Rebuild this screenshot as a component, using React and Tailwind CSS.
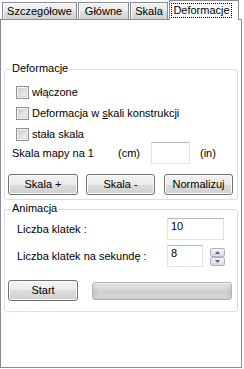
import React from "react";

function Tab({ w, children }) {
  return (
    <div
      className={`flex h-[17px] items-center justify-center border border-b-0 border-[#898c95] bg-[linear-gradient(#f3f3f3,#ebebeb_50%,#dedede_50%,#d3d3d3)] shadow-[inset_1px_1px_0_#fbfbfb] ${w}`}
    >
      {children}
    </div>
  );
}

function Check() {
  return (
    <div className="h-[13px] w-[13px] shrink-0 border border-[#8f8f8f] bg-[#f4f4f4] p-[1px]">
      <div className="h-full w-full border border-[#d8d8d8] bg-[linear-gradient(135deg,#cdcdcd,#f2f2f2)]" />
    </div>
  );
}

function Btn({ w, className = "", children }) {
  return (
    <div
      className={`flex h-[21px] shrink-0 items-center justify-center rounded-[3px] border border-[#707070] bg-[linear-gradient(#f2f2f2,#ebebeb_50%,#dddddd_50%,#cfcfcf)] shadow-[inset_0_0_0_1px_#fcfcfc] ${w} ${className}`}
    >
      {children}
    </div>
  );
}

function Input({ w, children }) {
  return (
    <div
      className={`h-[22px] shrink-0 border border-[#dfe2e8] border-t-[#b5b8c0] bg-white pl-[3px] pt-[1px] ${w}`}
    >
      {children}
    </div>
  );
}

function SpinBtn({ up }) {
  return (
    <div className="flex h-[9px] w-[15px] items-center justify-center rounded-[2px] border border-[#aeb4be] bg-[linear-gradient(#f7f7f7,#e6e6e6_50%,#d9dbe0)]">
      <svg width="5" height="3" viewBox="0 0 5 3">
        {up ? (
          <path d="M0 3 L2.5 0 L5 3 Z" fill="#4d6185" />
        ) : (
          <path d="M0 0 L2.5 3 L5 0 Z" fill="#4d6185" />
        )}
      </svg>
    </div>
  );
}

export default function App() {
  return (
    <div className="h-[369px] w-[244px] select-none bg-white font-['Liberation_Sans',Arial,sans-serif] text-[11px] leading-[13px] text-black">
      {/* tab strip */}
      <div className="relative z-10 flex h-[19px] items-end gap-[1px] pl-[2px]">
        <Tab w="w-[75px]">Szczegółowe</Tab>
        <Tab w="w-[51px]">Główne</Tab>
        <Tab w="w-[38px]">Skala</Tab>
        <div className="mb-[-1px] flex h-[20px] w-[70px] items-start border border-b-0 border-[#898c95] bg-white pl-[1px] pt-[2px]">
          <span className="flex h-[15px] w-[61px] items-center justify-center border border-dotted border-black">
            Deformacje
          </span>
        </div>
      </div>

      {/* panel */}
      <div className="h-[349px] w-[242px] border border-[#898c95] bg-white pl-[3px] pt-[49px]">
        {/* Deformacje group */}
        <div className="relative h-[131px] w-[234px] rounded-[3px] border border-[#d5dfe5]">
          <span className="absolute left-[6px] top-[-8px] bg-white px-[1px]">Deformacje</span>
          <div className="flex flex-col pt-[16px]">
            <div className="flex h-[13px] items-center gap-[3px] pl-[11px]">
              <Check />
              <span>włączone</span>
            </div>
            <div className="mt-[8px] flex h-[13px] items-center gap-[3px] pl-[11px]">
              <Check />
              <span>
                Deformacja w <span className="underline">s</span>kali konstrukcji
              </span>
            </div>
            <div className="mt-[8px] flex h-[13px] items-center gap-[3px] pl-[11px]">
              <Check />
              <span>stała skala</span>
            </div>
            <div className="mt-[1px] flex h-[22px] items-center pl-[7px]">
              <span className="w-[106px] shrink-0">Skala mapy na 1</span>
              <span className="w-[33px] shrink-0">(cm)</span>
              <Input w="w-[39px]" />
              <span className="ml-[10px]">(in)</span>
            </div>
            <div className="mt-[10px] flex pl-[3px]">
              <Btn w="w-[70px]">Skala +</Btn>
              <Btn w="w-[69px]" className="ml-[8px]">
                Skala -
              </Btn>
              <Btn w="w-[69px]" className="ml-[9px]">
                Normalizuj
              </Btn>
            </div>
          </div>
        </div>

        {/* Animacja group */}
        <div className="relative mt-[9px] h-[103px] w-[234px] rounded-[3px] border border-[#d5dfe5]">
          <span className="absolute left-[6px] top-[-8px] bg-white px-[1px]">Animacja</span>
          <div className="flex flex-col pt-[8px]">
            <div className="flex h-[22px] items-center pl-[12px]">
              <span className="w-[150px] shrink-0">Liczba klatek :</span>
              <Input w="w-[57px]">10</Input>
            </div>
            <div className="mt-[5px] flex h-[22px] items-center pl-[12px]">
              <span className="w-[150px] shrink-0">Liczba klatek na sekundę :</span>
              <Input w="w-[36px]">8</Input>
              <div className="ml-[7px] mt-[3px] flex flex-col self-start">
                <SpinBtn up />
                <SpinBtn />
              </div>
            </div>
            <div className="mt-[13px] flex items-start pl-[3px]">
              <Btn w="w-[70px]">Start</Btn>
              <div className="ml-[14px] mt-[2px] h-[18px] w-[140px] rounded-[3px] border border-[#b2b2b2] bg-[linear-gradient(#e6e6e6,#d6d6d6_45%,#cdcdcd_55%,#dadada)] shadow-[inset_0_1px_0_#f0f0f0,inset_3px_0_3px_rgba(0,0,0,0.06),inset_-3px_0_3px_rgba(0,0,0,0.06)]" />
            </div>
          </div>
        </div>
      </div>
    </div>
  );
}
